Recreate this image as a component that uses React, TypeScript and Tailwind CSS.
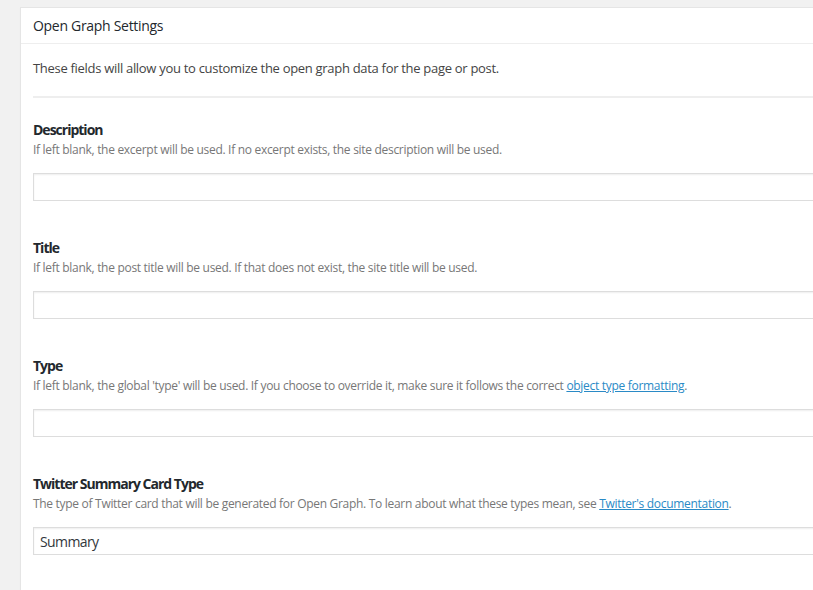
import React from 'react';

const font = { fontFamily: '"Open Sans", "Noto Sans", Arial, sans-serif' };

interface FieldProps {
  label: string;
  help: React.ReactNode;
  value?: string;
}

const Field: React.FC<FieldProps> = ({ label, help, value }) => (
  <div className="pt-[22px] pb-[15px]">
    <div className="text-[14px] leading-[20px] font-bold tracking-[-1px] text-[#23282d]">{label}</div>
    <p className="text-[12px] leading-[20px] tracking-[-0.3px] text-[#777]">{help}</p>
    <div className="mt-[13px] h-[28px] border border-[#ddd] bg-white shadow-[inset_0_1px_2px_rgba(0,0,0,0.07)] flex items-center px-[6px] text-[14px] tracking-[-0.6px] text-[#32373c]">
      {value}
    </div>
  </div>
);

const A: React.FC<{ children: React.ReactNode }> = ({ children }) => (
  <a href="#" className="text-[#2a8ac6] underline">{children}</a>
);

export default function App() {
  return (
    <div className="min-h-[590px] bg-[#f1f1f1] pt-[7px] pl-[20px] overflow-hidden" style={font}>
      <div className="bg-white border border-[#e5e5e5] border-r-0 w-[800px] min-h-[590px] shadow-[0_1px_1px_rgba(0,0,0,0.04)]">
        <div className="h-[36px] border-b border-[#eee] px-[12px] flex items-center">
          <h2 className="text-[14px] tracking-[-0.3px] text-[#23282d]">Open Graph Settings</h2>
        </div>
        <div className="pl-[12px]">
          <p className="text-[13px] leading-[20px] tracking-[-0.3px] text-[#444] pt-[14px] pb-[18px]">
            These fields will allow you to customize the open graph data for the page or post.
          </p>
          <div className="border-t-2 border-[#eee]" />
          <Field
            label="Description"
            help="If left blank, the excerpt will be used. If no excerpt exists, the site description will be used."
          />
          <Field
            label="Title"
            help="If left blank, the post title will be used. If that does not exist, the site title will be used."
          />
          <Field
            label="Type"
            help={<>If left blank, the global 'type' will be used. If you choose to override it, make sure it follows the correct <A>object type formatting</A>.</>}
          />
          <Field
            label="Twitter Summary Card Type"
            help={<>The type of Twitter card that will be generated for Open Graph. To learn about what these types mean, see <A>Twitter's documentation</A>.</>}
            value="Summary"
          />
        </div>
      </div>
    </div>
  );
}
